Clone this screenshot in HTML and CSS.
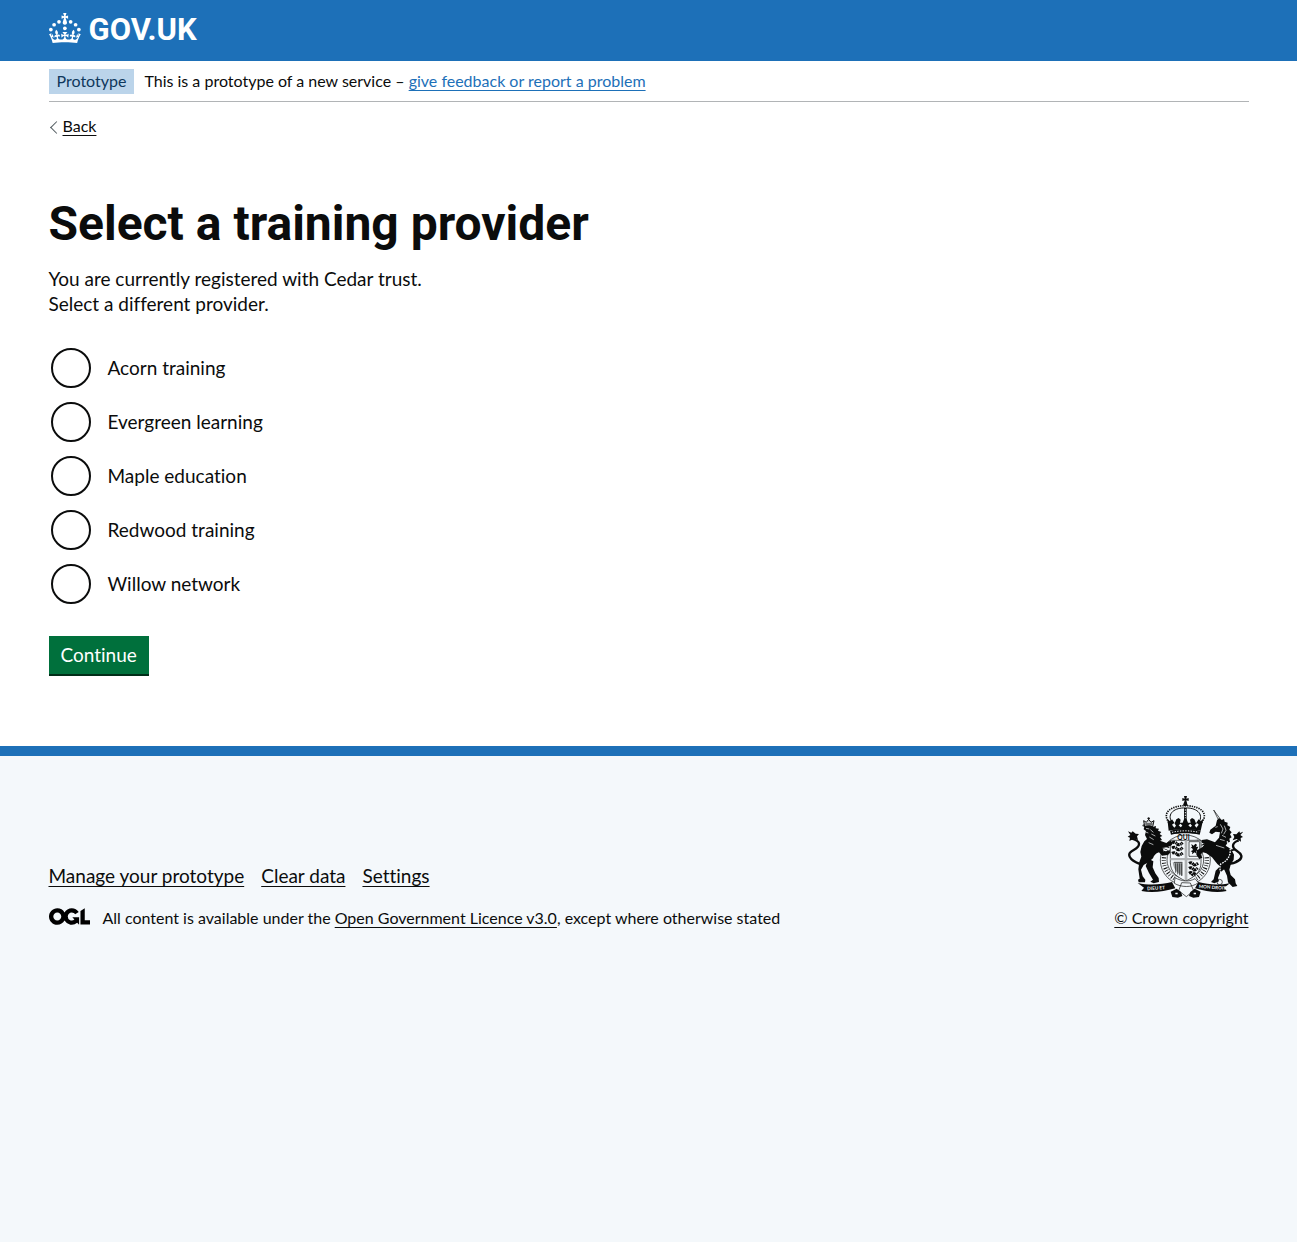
FILE: index.html
```html
<!DOCTYPE html>
<html lang="en">
<head>
<meta charset="utf-8">
<meta name="viewport" content="width=device-width, initial-scale=1">
<title>Select a training provider</title>
<link rel="stylesheet" href="styles.css">
</head>
<body>
<header class="header">
  <div class="container">
    <a class="header-logo" href="#" aria-label="GOV.UK">
      <svg class="crown" viewBox="0 0 64 60" aria-hidden="true">
        <circle cx="20" cy="17.6" r="3.7"/>
        <circle cx="10.2" cy="23.5" r="3.7"/>
        <circle cx="3.7" cy="33.2" r="3.7"/>
        <circle cx="31.7" cy="30.6" r="3.7"/>
        <circle cx="43.3" cy="17.6" r="3.7"/>
        <circle cx="53.2" cy="23.5" r="3.7"/>
        <circle cx="59.7" cy="33.2" r="3.7"/>
        <path d="M33.1,9.8c.2-.1.3-.3.5-.5l4.6,2.4v-6.8l-4.6,1.5c-.1-.2-.3-.3-.5-.5l1.9-5.9h-6.7l1.9,5.9c-.2.1-.3.3-.5.5l-4.6-1.5v6.8l4.6-2.4c.1.2.3.3.5.5l-2.6,8c-.9,2.8,1.2,5.7,4.1,5.7h0c3,0,5.1-2.9,4.1-5.7l-2.6-8ZM37,37.9s-3.4,3.8-4.1,6.1c2.2,0,4.2-.5,6.4-2.8l-.7,8.5c-2-2.8-4.4-4.1-5.7-3.8.1,3.1.5,6.7,5.8,7.2,3.7.3,6.7-1.5,7-3.8.4-2.6-2-4.3-3.7-1.6-1.4-4.5,2.4-6.1,4.9-3.2-1.9-4.5-1.8-7.7,2.4-10.9,3,4,2.6,7.3-1.2,11.1,2.4-1.3,6.2,0,4,4.6-1.2-2.8-3.7-2.2-4.2.2-.3,1.7.7,3.7,3,4.2,1.9.3,4.7-.9,7-5.9-1.3,0-2.4.7-3.9,1.7l2.4-8c.6,2.3,1.4,3.7,2.2,4.5.6-1.6.5-2.8,0-5.3l5,1.8c-2.6,3.6-5.2,8.7-7.3,17.5-7.4-1.1-15.7-1.7-24.5-1.7h0c-8.8,0-17.1.6-24.5,1.7-2.1-8.9-4.7-13.9-7.3-17.5l5-1.8c-.5,2.5-.6,3.7,0,5.3.8-.8,1.6-2.3,2.2-4.5l2.4,8c-1.5-1-2.6-1.7-3.9-1.7,2.3,5,5.2,6.2,7,5.9,2.3-.4,3.3-2.4,3-4.2-.5-2.4-3-3.1-4.2-.2-2.2-4.6,1.6-6,4-4.6-3.7-3.7-4.2-7.1-1.2-11.1,4.2,3.2,4.3,6.4,2.4,10.9,2.5-2.8,6.3-1.3,4.9,3.2-1.8-2.7-4.1-1-3.7,1.6.3,2.3,3.3,4.1,7,3.8,5.4-.5,5.7-4.2,5.8-7.2-1.3-.2-3.7,1-5.7,3.8l-.7-8.5c2.2,2.3,4.2,2.7,6.4,2.8-.7-2.3-4.1-6.1-4.1-6.1h10.6Z"/>
      </svg>
      <span class="wordmark">GOV.UK</span>
    </a>
  </div>
</header>

<div class="container page">
  <div class="phase-banner">
    <strong class="tag">Prototype</strong>
    <span>This is a prototype of a new service – <a class="link" href="#">give feedback or report a problem</a></span>
  </div>
  <a class="back-link" href="#">Back</a>

  <main class="main">
    <h1 class="heading">Select a training provider</h1>
    <p class="body">You are currently registered with Cedar trust.<br>Select a different provider.</p>
    <form>
      <div class="radios" role="radiogroup" aria-label="Training provider">
        <div class="radio"><input type="radio" name="provider" id="provider-1" value="acorn"><label for="provider-1">Acorn training</label></div>
        <div class="radio"><input type="radio" name="provider" id="provider-2" value="evergreen"><label for="provider-2">Evergreen learning</label></div>
        <div class="radio"><input type="radio" name="provider" id="provider-3" value="maple"><label for="provider-3">Maple education</label></div>
        <div class="radio"><input type="radio" name="provider" id="provider-4" value="redwood"><label for="provider-4">Redwood training</label></div>
        <div class="radio"><input type="radio" name="provider" id="provider-5" value="willow"><label for="provider-5">Willow network</label></div>
      </div>
      <button class="button" type="button">Continue</button>
    </form>
  </main>
</div>

<footer class="footer">
  <div class="container footer-row">
    <div class="footer-main">
      <ul class="footer-links">
        <li><a href="#">Manage your prototype</a></li>
        <li><a href="#">Clear data</a></li>
        <li><a href="#">Settings</a></li>
      </ul>
      <div class="licence">
        <svg class="ogl" viewBox="0 0 483.2 195.7" aria-hidden="true"><path d="M421.5 142.8V.1l-50.7 32.3v161.1h112.4v-50.7zm-122.3-9.6A47.12 47.12 0 0 1 221 97.8c0-26 21.1-47.1 47.1-47.1 16.7 0 31.4 8.7 39.7 21.8l42.7-27.2A97.63 97.63 0 0 0 268.1 0c-36.5 0-68.3 20.1-85.1 49.7A98 98 0 0 0 97.8 0C43.9 0 0 43.9 0 97.8s43.9 97.8 97.8 97.8c36.5 0 68.3-20.1 85.1-49.7a97.76 97.76 0 0 0 149.6 25.4l19.4 22.2h3v-87.8h-80l24.3 27.5zM97.8 145c-26 0-47.1-21.1-47.1-47.1s21.1-47.1 47.1-47.1 47.1 21.1 47.1 47.1S123.8 145 97.8 145"/></svg>
        <span>All content is available under the <a href="#">Open Government Licence v3.0</a>, except where otherwise stated</span>
      </div>
    </div>
    <a class="copyright" href="#">
      <svg class="arms" viewBox="33 18 348 306" aria-hidden="true">
        <!-- royal crown -->
        <path d="M204 18h9l-2 8 7-2v9l-7-2 2 8h-9l2-8-7 2v-9l7 2z"/>
        <circle cx="208" cy="43" r="6"/>
        <path class="line3" d="M168 98C150 70 178 52 208 54c30-2 58 16 40 44"/>
        <path class="pearls" d="M159 98C134 64 172 47 208 47c36 0 74 17 49 51"/>
        <path d="M204 54h8v38h-8z"/>
        <path class="cut-dots" d="M208 58v28"/>
        <path d="M154 86l8 8 6-6 8 12 5-12 7-4 6 5-2 9 8 0 4-10 4-4 4 4 4 10 8 0-2-9 6-5 7 4 5 12 8-12 6 6 8-8-8 36c-30-6-66-6-96 0z"/>
        <path class="cut" d="M168 104l7-5 5 8-5 6zM188 106l6-5 5 6-5 5zM217 106l6-5 5 6-5 5zM236 106l7-7 5 5-7 9z"/>
        <path d="M162 122c28-8 64-8 92 0l-3 12c-26-6-60-6-86 0z"/>
        <path class="cut-dots" d="M168 127c26-6 54-6 80 0"/>

        <!-- garter -->
        <circle class="paper" cx="208" cy="210" r="76"/>
        <circle class="line2" cx="208" cy="210" r="75"/>
        <circle class="line2" cx="208" cy="210" r="55"/>
        <text class="motto" x="184" y="150">QUI</text>
        <path class="scratch" d="M144 202a65 65 0 0 0 32 64M272 202a65 65 0 0 1-32 64M147 187l8-18M262 162l8 22"/>
        <path class="star" d="M170 148l3 5 5-3-2 6M238 146l4 5 5-3-1 6"/>

        <!-- quartered shield -->
        <path class="paper line2" d="M163 151h92v66c0 30-20 44-46 56-26-12-46-26-46-56z"/>
        <path class="grey" d="M206 151h8v120l-5 2-3-2zM163 204h92v7h-92z"/>
        <path class="lions" d="M168 159q8-5 14 2t18-3M168 174q8-5 14 2t18-3M168 190q8-5 14 2t18-3M219 220q8-5 12 2t16-3M219 235q8-5 12 2t14-3M219 250q8-5 10 2t8-5"/>
        <path class="line2" d="M219 155h32v44h-32z"/>
        <path d="M226 162l7 5 5-6 5 3-3 7 7-1-4 8 4 5-6-1 1 10-6-5-8 6 1-7-5-2 7-4-3-6-5 1 5-5z"/>
        <path class="midgrey" d="M170 217h30v40c-16-7-27-17-30-40z"/>
        <path class="line2" d="M174 217h25M179 220v28M185 220v33M191 220v36M197 220v38"/>

        <!-- lion -->
        <path class="coronet" d="M86 110l-3-18 8 5 7-9 7 9 9-5-4 18zM98 82v7M94 85h8M88 102h21"/>
        <path d="M84 109c8-5 21-4 28 1l8-2-1 7 10 1-3 6 10 4-5 6 8 6-7 3 6 9-6 2 19 7 12-7 7 6-3 8-13 6-14 1 3 13 17-5 3 7-8 7-17 2-9-10c-11 4-15 10-18 18l-14 12-14 8-8 14 5 20 8 10-1 8-19 0-2-8 5-3-4-28 3-22 6-16-3-14 4-18 8-14 8-7-6-12 3-12-7-5 2-8-6-2 3-7z"/>
        <path d="M98 206l14 8-2 18 8 18 10 14 1 12-16 4-10-5 8-6-12-20-10-21z"/>
        <path class="cutline" d="M90 115l10 2M89 126l8 3M103 119l9 8M106 132l12 6M100 141l13 8M98 158l14 6"/>
        <path class="line6" d="M80 224C48 216 34 200 42 188c8-10 28-12 27-27-1-12-16-11-24-17"/>
        <path d="M36 124l10 4 4-4 9 7 10 1-6 7 3 11-12-4-14 7 2-10-7-3 8-5z"/>

        <!-- unicorn -->
        <path class="line2" d="M293 60l16 33M293 60l22 30"/>
        <path d="M309 84l8 6 7-3 2 8 9 3-1 8 9 5-3 8 7 8-5 6 5 9-7 4 2 9-8 4-5 8 16 10 9 17-1 15-9 15-4 15 4 16 13 13 2 12 5 8-14 3-14-14-3-20-8-18-21-17-16-20-17-12-10-3-7 6 5 10-9 4-9-13 2-13 16-9 8-10-9-4-1-8 16-2 20 7 4 2 12-14 3-16-13-2-11 8-8-5 3-9 16-12 4-16z"/>
        <path d="M318 212l14 4-6 20-14 12-6 16 3 10-14 6-10-4 8-8 6-26 14-14z"/>
        <path class="cutline" d="M298 112l7-2M313 103l8 14-5 13M325 107l5 14-7 12M318 136l12 6M312 148l14 4M300 166l25 8"/>
        <path class="line6" d="M334 222c28-2 44-14 42-25-3-14-25-15-25-29 0-12 10-14 17-17"/>
        <path d="M382 125l-10 4-2-5-9 9-10-1 4 9-5 10 12-4 13 8-1-11 7-3-8-6z"/>
        <path class="line4" d="M360 214l15-6M358 178l-12 3"/>
        <path class="chain" d="M333 154c19 27 9 56-18 67-9 17 4 27 0 45"/>
        <circle class="line2" cx="311" cy="276" r="8"/>

        <!-- scroll -->
        <path d="M65 279c37 8 74 4 103-3l10 19c-35 9-67 15-102 8l8-10z"/>
        <path d="M343 279c-37 8-67 4-96-3l-10 19c35 9 64 15 95 8l-8-10z"/>
        <text class="scroll" x="94" y="301" transform="rotate(-4 94 301)">DIEU ET</text>
        <text class="scroll" x="248" y="294" transform="rotate(4 248 294)">MON DROIT</text>
        <path class="paper line2" d="M177 263c20 11 40 14 60 3l10 12c-20 16-52 14-72 2zM197 278l26 1 10 23-22 18-23-18z"/>
        <path d="M164 305l18-9 13 10 4 12-13 5-17-2zM254 305l-18-9-13 10-4 12 13 5 17-2z"/>
        <path class="cut" d="M178 308h7v5h-7zM233 308h7v5h-7z"/>
      </svg>
      <span>© Crown copyright</span>
    </a>
  </div>
</footer>
</body>
</html>
```
FILE: styles.css
```css
* { box-sizing: border-box; }

html { background: #f4f8fb; }

body {
  margin: 0;
  background: #fff;
  color: #0b0c0c;
  font-family: Lato, "Liberation Sans", sans-serif;
  font-size: 19px;
  line-height: 25px;
  font-variant-ligatures: none;
}

a {
  color: inherit;
  text-decoration: underline;
  text-decoration-thickness: 1px;
  text-underline-offset: 3px;
  text-decoration-skip-ink: none;
}

.container {
  max-width: 1200px;
  margin: 0 auto;
}

@media (max-width: 1260px) {
  .container { margin: 0 30px; }
}

.header {
  background: #1d70b8;
  color: #fff;
  padding: 13px 0 18px;
}

.header-logo {
  display: inline-flex;
  align-items: flex-start;
  gap: 8px;
  height: 30px;
  text-decoration: none;
  vertical-align: top;
}

.crown {
  width: 32px;
  height: 30px;
  fill: currentColor;
}

.wordmark {
  font-family: Roboto, "Liberation Sans", sans-serif;
  font-size: 31px;
  font-weight: 700;
  line-height: 34px;
}

.phase-banner {
  display: flex;
  align-items: flex-start;
  gap: 10px;
  padding: 8px 0 7px;
  border-bottom: 1px solid #b1b4b6;
  font-size: 16px;
  line-height: 23px;
}

.tag {
  padding: 0 8px 2px;
  background: #bbd4ea;
  color: #0f385c;
  font-weight: 400;
}

.link { color: #1d70b8; }

.back-link {
  display: inline-block;
  position: relative;
  margin-top: 14px;
  padding-left: 14px;
  font-size: 16px;
  line-height: 20px;
  vertical-align: top;
}

.back-link::before {
  content: "";
  position: absolute;
  top: 7px;
  left: 3px;
  width: 8px;
  height: 8px;
  border: solid #505a5f;
  border-width: 1px 0 0 1px;
  transform: rotate(-45deg);
}

.main { padding: 63px 0 70px; }

.heading {
  margin: 0 0 17px;
  font-family: Roboto, "Liberation Sans", sans-serif;
  font-size: 48px;
  font-weight: 700;
  line-height: 50px;
}

.body { margin: 0 0 30px; }

.radios {
  display: grid;
  gap: 10px;
  margin-bottom: 30px;
}

.radio {
  display: flex;
  align-items: center;
}

.radio input {
  appearance: none;
  width: 40px;
  height: 40px;
  margin: 2px;
  border: 2px solid #0b0c0c;
  border-radius: 50%;
  background: #fff;
}

.radio input:checked { box-shadow: inset 0 0 0 8px #fff, inset 0 0 0 20px #0b0c0c; }

.radio label { padding: 0 15px 2px; }

.button {
  display: block;
  padding: 6px 12px 7px;
  border: 0;
  background: #00703c;
  box-shadow: 0 2px 0 #002d18;
  color: #fff;
  font: inherit;
  font-variant-ligatures: none;
  margin-bottom: 2px;
}

.footer {
  padding: 40px 0 25px;
  border-top: 10px solid #1d70b8;
  background: #f4f8fb;
}

.footer-row {
  display: flex;
  align-items: flex-end;
  justify-content: space-between;
  gap: 30px;
}

.footer-links {
  display: flex;
  flex-wrap: wrap;
  gap: 17px;
  margin: 0 0 20px;
  padding: 0;
  list-style: none;
}

.licence {
  display: flex;
  align-items: flex-start;
  gap: 13px;
  font-size: 16px;
  line-height: 20px;
}

.ogl {
  width: 41px;
  height: 17px;
  flex: none;
}

.copyright {
  display: grid;
  justify-items: end;
  gap: 10px;
  font-size: 16px;
  line-height: 20px;
  white-space: nowrap;
}

.arms {
  width: 116px;
  height: 102px;
  margin-right: 6px;
  fill: #0b0c0c;
}

.arms .line2, .arms .line3, .arms .line4, .arms .line6 { fill: none; stroke: #0b0c0c; stroke-width: 2; }
.arms .line3 { stroke-width: 3; }
.arms .line4 { stroke-width: 5; }
.arms .line6 { stroke-width: 7; }
.arms .coronet { fill: #d0d3d5; stroke: #0b0c0c; stroke-width: 3; }
.arms .paper { fill: #f4f8fb; }
.arms .cut { fill: #f4f8fb; }
.arms .cut-dots { fill: none; stroke: #f4f8fb; stroke-width: 3; stroke-dasharray: 4 4; }
.arms .cutline { fill: none; stroke: #f4f8fb; stroke-width: 2; }
.arms .pearls { fill: none; stroke: #0b0c0c; stroke-width: 5; stroke-dasharray: 4 3; }
.arms .chain { fill: none; stroke: #f4f8fb; stroke-width: 4; stroke-dasharray: 5 3; }
.arms .scratch { fill: none; stroke: #0b0c0c; stroke-width: 13; stroke-dasharray: 3 5 2 6; }
.arms .grey { fill: #b1b4b6; }
.arms .midgrey { fill: #a0a4a6; }
.arms .lions { fill: none; stroke: #0b0c0c; stroke-width: 9; stroke-dasharray: 9 2 4 1; }
.arms .motto { font-size: 20px; font-weight: 700; }
.arms .scroll { fill: #f4f8fb; font-size: 14px; font-weight: 700; }
```
